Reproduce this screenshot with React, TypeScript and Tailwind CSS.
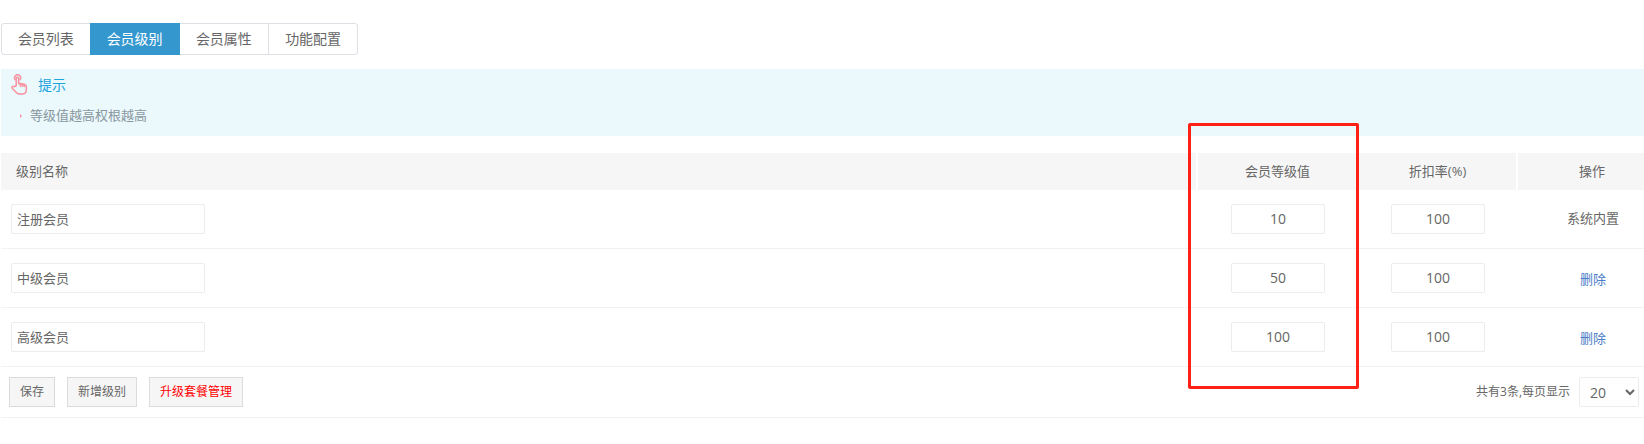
import { useState } from "react";

const fontStack = "font-['Open_Sans','Noto_Sans_CJK_SC',sans-serif]";

const tabs = ["会员列表", "会员级别", "会员属性", "功能配置"];

const levels = [
  { name: "注册会员", value: "10", rate: "100", builtIn: true },
  { name: "中级会员", value: "50", rate: "100", builtIn: false },
  { name: "高级会员", value: "100", rate: "100", builtIn: false },
];

const HandIcon = () => (
  <svg width="20" height="22" viewBox="0 0 20 22" fill="none" stroke="#f7929f" strokeWidth="1.5" strokeLinecap="round" strokeLinejoin="round">
    <path d="M5.2 5.6a3 3 0 1 1 4.8 0" />
    <path d="M6.2 11.8V4.4a1.2 1.2 0 0 1 2.4 0v5.4l1.6-.3 1.5.3 1.4.3 1.6.4c1 .3 1.6 1 1.6 2.1v3.2c0 2.6-1.6 4.3-4.1 4.3H9.6c-1.3 0-2.2-.4-3-1.3l-4.2-4.3c-.6-.6-.6-1.4-.1-1.9.6-.5 1.4-.5 2 .1z" />
    <path d="M10.4 9.6v2.6M12.4 10v2.2M14.2 10.4v2" />
  </svg>
);

export default function App() {
  const [active] = useState(1);

  return (
    <div className={`relative h-[444px] overflow-hidden bg-white pl-px text-[#666] ${fontStack}`}>
      {/* Tabs */}
      <div className="pt-[23px]">
        <div className="flex h-8 w-[357px] rounded-[3px] border border-[#dfdfe6] bg-white">
          {tabs.map((tab, index) => (
            <div
              key={tab}
              className={`flex items-center justify-center text-sm ${index === active ? "-my-px h-8 bg-[#3498cf] text-white" : "text-[#666]"} ${index === 0 ? "w-[88px]" : index === 1 ? "w-[90px]" : "w-[89px]"} ${index === 3 ? "border-l border-[#dfdfe6]" : ""}`}
            >
              {tab}
            </div>
          ))}
        </div>
      </div>

      {/* Tip box */}
      <div className="mt-[14px] h-[67px] bg-[#ebf8fc]">
        <div className="flex h-[31px] items-center pl-[9px]">
          <HandIcon />
          <span className="ml-[8px] text-sm text-[#1ca4dc]">提示</span>
        </div>
        <div className="mt-[6px] flex items-center pl-[19px] text-[13px] text-[#88979e]">
          <span className="h-0 w-0 border-y-2 border-l-2 border-y-transparent border-l-[#f7929f]" />
          <span className="ml-[8px]">等级值越高权根越高</span>
        </div>
      </div>

      {/* Table header */}
      <div className="mt-[17px] flex h-[37px] gap-[2px] text-[13px] text-[#666]">
        <div className="flex w-[1195px] items-center bg-[#f6f6f6] pl-[15px]">级别名称</div>
        <div className="flex w-[159px] items-center justify-center bg-[#f6f6f6]">会员等级值</div>
        <div className="flex w-[157px] items-center justify-center bg-[#f6f6f6]">
          折扣率<span className="text-[13px]">(%)</span>
        </div>
        <div className="flex flex-1 items-center justify-center bg-[#f6f6f6] pl-[22px]">操作</div>
      </div>

      {/* Rows */}
      {levels.map((level) => (
        <div key={level.name} className="flex h-[59px] items-center border-b border-[#f2f2f2] text-[13px]">
          <div className="w-[1197px] pl-[10px]">
            <input
              defaultValue={level.name}
              className="h-[30px] w-[194px] rounded-[2px] border border-[#ececec] px-[5px] pb-[2px] text-[13px] text-[#666] outline-none"
            />
          </div>
          <div className="flex w-[160px] justify-center">
            <input
              defaultValue={level.value}
              className="h-[30px] w-[94px] rounded-[2px] border border-[#ececec] pb-[2px] text-center text-sm text-[#666] outline-none"
            />
          </div>
          <div className="flex w-[160px] justify-center">
            <input
              defaultValue={level.rate}
              className="h-[30px] w-[94px] rounded-[2px] border border-[#ececec] pb-[2px] text-center text-sm text-[#666] outline-none"
            />
          </div>
          <div className="flex flex-1 justify-center pl-[24px] text-[13px]">
            {level.builtIn ? (
              <span className="text-[#666]">系统内置</span>
            ) : (
              <a className="pt-[3px] text-[#4a7cc7]">删除</a>
            )}
          </div>
        </div>
      ))}

      {/* Footer */}
      <div className="flex h-[51px] items-center justify-between border-b border-[#f2f2f2] pr-[5px] pl-2 text-xs">
        <div className="flex gap-3">
          <button className="h-[30px] w-[46px] border border-[#dcdcdc] bg-[#f6f6f6] text-[#666]">保存</button>
          <button className="h-[30px] w-[70px] border border-[#dcdcdc] bg-[#f6f6f6] text-[#666]">新增级别</button>
          <button className="h-[30px] w-[94px] border border-[#dcdcdc] bg-[#f6f6f6] text-[#ff0000]">升级套餐管理</button>
        </div>
        <div className="flex items-center gap-[9px]">
          <span className="text-[#666]">共有3条,每页显示</span>
          <select defaultValue="20" className="h-[30px] w-[60px] rounded-[2px] border border-[#ececec] bg-white pl-[6px] text-sm text-[#666] outline-none">
            <option value="10">10</option>
            <option value="20">20</option>
            <option value="50">50</option>
          </select>
        </div>
      </div>

      {/* Red annotation */}
      <div className="absolute top-[123px] left-[1188px] h-[266px] w-[171px] rounded-[2px] border-[3px] border-[#ff2016]" />
    </div>
  );
}
